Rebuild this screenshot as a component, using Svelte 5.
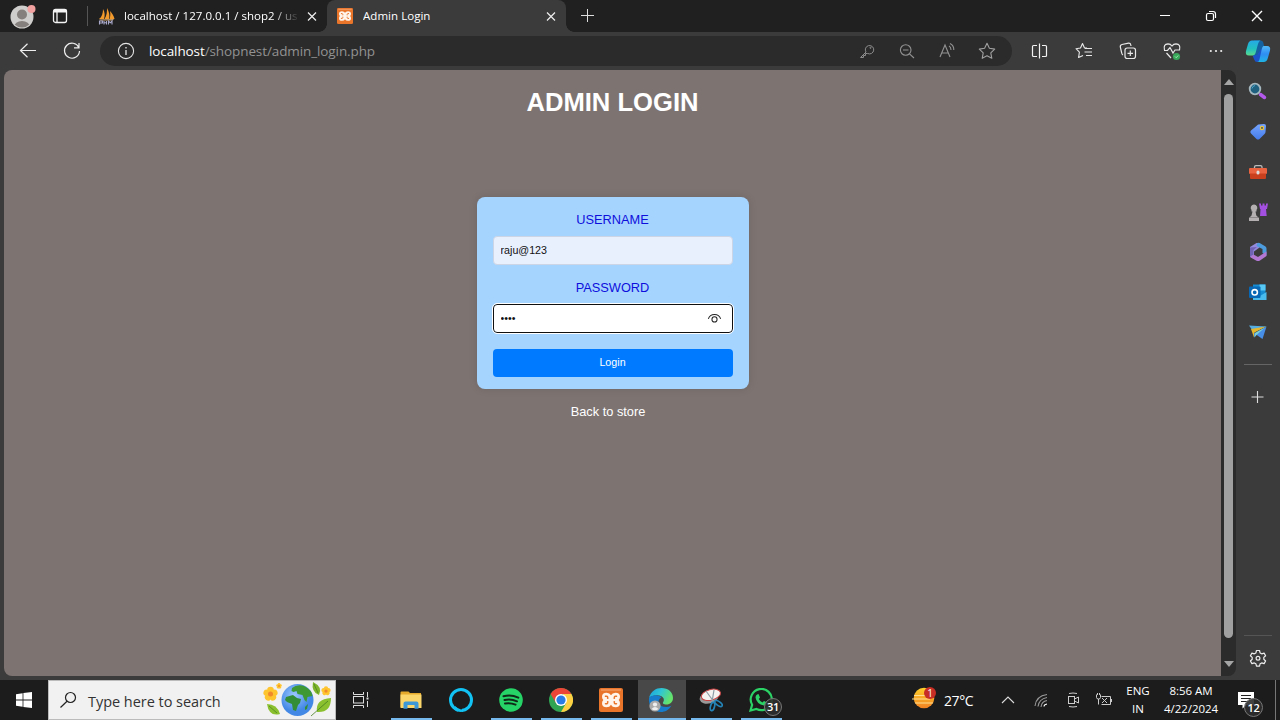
<script>
  let username = $state('raju@123');
  let password = $state('1234');
</script>

{#snippet xampp(size)}
  <svg width={size} height={size} viewBox="0 0 24 24">
    <rect width="24" height="24" rx="2" fill="#e9752b" />
    <path d="M2 2h20" stroke="#f6ab78" stroke-width="1" />
    <path d="M7.500 4.800Q10.800 4.800 12 7.300 13.200 4.800 16.500 4.800q4.500 0 4.500 4 0 2-1.300 3.200Q21 13.200 21 15.200q0 4-4.500 4-3.300 0-4.500-2.500-1.200 2.500-4.500 2.500-4.500 0-4.500-4 0-2 1.300-3.200Q3 10.800 3 8.800q0-4 4.500-4z" fill="#fff5ea" />
    <path d="M6.500 8.300q2.200-.500 2.200 1.400v4.600q0 1.900-2.200 1.400M17.500 8.300q-2.200-.500-2.200 1.400v4.600q0 1.900 2.200 1.400" fill="none" stroke="#e9752b" stroke-width="1.500" stroke-linecap="round" />
    <path d="M7 12h10" stroke="#fff5ea" stroke-width="2.200" />
  </svg>
{/snippet}

{#snippet close()}
  <svg width="12" height="12" viewBox="0 0 12 12"><path d="M2 2.500l8 8M10 2.500l-8 8" stroke="#eee" stroke-width="1.200" /></svg>
{/snippet}

{#snippet flower(x, y, s)}
  <g transform="translate({x} {y}) scale({s})">
    {#each [0, 72, 144, 216, 288] as a}
      <circle cx="0" cy="-4.000" r="3.300" fill="#ffc52e" transform="rotate({a})" />
    {/each}
    <circle r="2.500" fill="#f08a2c" />
  </g>
{/snippet}

<div class="screen">
  <div class="browser">
    <header class="tabs">
      <span class="avatar">
        <svg width="28" height="28" viewBox="0 0 28 28">
          <circle cx="14" cy="14" r="11.500" fill="#d0cecc" />
          <clipPath id="face"><circle cx="14" cy="14" r="10.500" /></clipPath>
          <g clip-path="url(#face)" fill="#85807d"><circle cx="14" cy="11.500" r="5" /><ellipse cx="14" cy="24" rx="8" ry="6" /></g>
          <circle cx="23.500" cy="6" r="4" fill="#f2a0a0" />
        </svg>
      </span>
      <span class="workspace">
        <svg width="16" height="16" viewBox="0 0 16 16"><rect x="1.500" y="1.500" width="13" height="13" rx="2" fill="none" stroke="#f4f4f4" stroke-width="1.300" /><path d="M1.500 3h13" stroke="#f4f4f4" stroke-width="3" /><path d="M5 4v10" stroke="#f4f4f4" stroke-width="1.300" /></svg>
      </span>
      <span class="tabline"></span>
      <div class="tab first">
        <svg width="17" height="17" viewBox="0 0 17 17">
          <path d="M1 11C4 9 5 5 5 1c2 3 2 7 1 10zM6.500 11C9 7 9 4 9 0c2 4 3 7 2 11zM11.500 11c1-3 1-5 .5-8 2 2 4 5 4.500 8z" fill="#f39a2d" />
          <path d="M1 11.500l15-.500-1.500 1.500h-12z" fill="#c9a06a" />
          <path d="M1.500 16.500v-3.500h3v2H2m4-2v3.500-1.800h2.500V13v3.500m2 0V13l1.800 1.800L14 13v3.500" stroke="#a9a9cc" stroke-width="1.100" fill="none" />
        </svg>
        <span class="tabname fade">localhost / 127.0.0.1 / shop2 / us</span>
        {@render close()}
      </div>
      <div class="tab active">
        {@render xampp(16)}
        <span class="tabname">Admin Login</span>
        {@render close()}
      </div>
      <span class="newtab"><svg width="16" height="16" viewBox="0 0 16 16"><path d="M7.500 1v13M1 7.500h13" stroke="#ddd" stroke-width="1" /></svg></span>
      <div class="windowbtns">
        <svg width="46" height="32" viewBox="0 0 46 32"><path d="M18 15.500h10" stroke="#fff" /></svg>
        <svg width="46" height="32" viewBox="0 0 46 32" fill="none" stroke="#fff" stroke-width="1.200"><rect x="18.500" y="13.500" width="7" height="7" rx="1.500" /><path d="M21 11.500h4q2.500 0 2.500 2.500v4" /></svg>
        <svg width="46" height="32" viewBox="0 0 46 32"><path d="M18 11l10 10M28 11L18 21" stroke="#fff" stroke-width="1.400" /></svg>
      </div>
    </header>

    <nav class="toolbar">
      <svg class="back" width="20" height="20" viewBox="0 0 20 20" fill="none" stroke="#eee" stroke-width="1.200"><path d="M18 9.500H2.500M9.500 2.800L2.500 9.500l7 6.700" /></svg>
      <svg class="reload" width="20" height="20" viewBox="0 0 20 20" fill="none" stroke="#eee" stroke-width="1.200"><path d="M16.800 6.500A7.500 7.500 0 1 0 17.500 10M17 2v4.800h-5" /></svg>
      <div class="address">
        <svg width="18" height="18" viewBox="0 0 18 18" fill="none" stroke="#e4e4e4"><circle cx="9" cy="9" r="7.600" stroke-width="1.100" /><path d="M9 8v5M9 5v1.400" stroke-width="1.300" /></svg>
        <span class="url"><b>localhost</b>/shopnest/admin_login.php</span>
        <div class="pageicons">
          <svg width="40" height="30" viewBox="0 0 40 30" fill="none" stroke="#8d8d8d"><path d="M19 16l-5.500 5.500h3v-2h2v-2h2.200a4.200 4.200 0 1 0-1.700-1.500z" stroke-linejoin="round" /><circle cx="23.500" cy="11.800" r=".6" /></svg>
          <svg width="40" height="30" viewBox="0 0 40 30" fill="none" stroke="#929292" stroke-width="1.100"><circle cx="18.700" cy="14" r="5.300" /><path d="M16 14h5.500M22.500 17.800l4.500 4.200" /></svg>
          <svg width="40" height="30" viewBox="0 0 40 30" fill="none" stroke="#929292" stroke-width="1.100"><path d="M13 21l5-12 5 12M15 17h6M22 10q2 1 2 4M23 7.500q4 2 3.800 6.500" /></svg>
          <svg width="40" height="30" viewBox="0 0 40 30" fill="none" stroke="#a0a0a0" stroke-width="1.100"><path d="M20 7.300l2.400 5 5.300.8-3.900 3.800 1 5.400-4.800-2.600-4.800 2.600 1-5.400-3.900-3.800 5.300-.8z" stroke-linejoin="round" /></svg>
        </div>
      </div>
      <div class="tools">
        <svg width="44" height="32" viewBox="0 0 44 32" fill="none" stroke="#f2f2f2" stroke-width="1.200"><path d="M19 10.500H15.500q-1 0-1 1v9q0 1 1 1H19M24 10.500H27.500q1 0 1 1v9q0 1-1 1H24M21.500 8.500v15" /></svg>
        <svg width="44" height="32" viewBox="0 0 44 32" fill="none" stroke="#e8e8e8" stroke-width="1.100"><path d="M25 13h-2.500L20.500 8.500l-2 4.500-4.500.7 3.400 3.500-.8 5.300 4.400-2M23 13.500h7M22.500 17h7.500M24 20.500h6" stroke-linejoin="round" /></svg>
        <svg width="44" height="32" viewBox="0 0 44 32" fill="none" stroke="#e8e8e8" stroke-width="1.200"><rect x="19" y="13" width="10.500" height="10.500" rx="2.200" /><path d="M24.300 15.500v5.500M21.500 18.300h5.500M17 20q-1-.5-1.300-2L14.300 12q-.3-2 1.700-2.500l6.500-1.300q2-.2 2.300 1.800l.2 1" /></svg>
        <svg width="44" height="32" viewBox="0 0 44 32" fill="none" stroke="#e8e8e8" stroke-width="1.200"><path d="M14.500 15Q13 9 18 8.800q2.500 0 4 2.200 1.500-2.200 4-2.200 5 .2 3.500 6.200M14 15.500h3.500l2.500-3 3 5.500 2-3h5M16.500 18l4.500 5" /><circle cx="26.500" cy="21.500" r="3.600" fill="#39a85a" stroke="none" /><path d="M25 21.500l1.200 1.200 2-2.200" stroke="#b8ffc6" stroke-width=".8" /></svg>
        <svg width="44" height="32" viewBox="0 0 44 32" fill="#eee"><circle cx="16.800" cy="16" r="1.100" /><circle cx="22" cy="16" r="1.100" /><circle cx="27.200" cy="16" r="1.100" /></svg>
      </div>
      <svg class="copilot" width="26" height="26" viewBox="0 0 26 26">
        <defs>
          <linearGradient id="cpA" x2="0" y2="1"><stop stop-color="#25a9e8" /><stop offset=".55" stop-color="#22c0c0" /><stop offset="1" stop-color="#5bdc8c" /></linearGradient>
          <linearGradient id="cpB" x2="0" y2="1"><stop stop-color="#52b9f8" /><stop offset=".5" stop-color="#2f8df2" /><stop offset="1" stop-color="#1fb4e4" /></linearGradient>
        </defs>
        <path d="M9 2.500h6.500q2.500 0 3 3l.8 3-5 9.500H9z" fill="#14629f" />
        <path d="M7.500 17.500l4.500-.500 5.500-8-2 12.500q-.6 2.500-3.300 2.500-2.300 0-3-2.500z" fill="#1c53c9" />
        <path d="M7 2.500h8.500q-1.800.8-2.500 3.500l-2.300 8.500Q10 17.500 7.500 17.500H4q-4 0-3-4.500L3 6q1-3.500 4-3.500z" fill="url(#cpA)" />
        <path d="M18.500 8H22q4 0 3 4.500l-2 7q-1 4.500-4.500 4.500H12q2 0 2.700-3.500L16.800 11q.5-2.500 1.700-3z" fill="url(#cpB)" />
      </svg>
    </nav>

    <div class="content">
      <main class="page">
        <h1>ADMIN LOGIN</h1>
        <form onsubmit={(e) => e.preventDefault()}>
          <label for="username">USERNAME</label>
          <input id="username" type="text" bind:value={username} />
          <label for="password">PASSWORD</label>
          <div class="password">
            <input id="password" type="password" bind:value={password} />
            <svg width="15" height="11" viewBox="0 0 16 12" fill="none" stroke="#222" stroke-width="1.100"><path d="M1.300 6.500Q2.800 1.700 8 1.700t6.700 4.800" /><circle cx="8" cy="7" r="2.800" /></svg>
          </div>
          <button>Login</button>
        </form>
        <a href="#store">Back to store</a>
      </main>
      <div class="scrollbar">
        <svg width="10" height="6" viewBox="0 0 10 6"><path d="M5 0l5 6H0z" fill="#a5a5a5" /></svg>
        <span class="thumb"></span>
        <svg width="10" height="6" viewBox="0 0 10 6"><path d="M0 0h10L5 6z" fill="#a5a5a5" /></svg>
      </div>
      <aside class="sidebar">
        <svg viewBox="0 0 40 40"><path d="M22.500 22.500l4 3" stroke="#b359ec" stroke-width="3.500" stroke-linecap="round" /><circle cx="17" cy="17" r="5.300" fill="#1f607f" stroke="#a5b7be" stroke-width="1.800" /><path d="M14 16.500q.5-2.500 3-3" stroke="#4ea5c5" fill="none" /></svg>
        <svg viewBox="0 0 40 40"><defs><linearGradient id="tagG" x2="0" y2="1"><stop stop-color="#75a4ff" /><stop offset="1" stop-color="#457ce9" /></linearGradient></defs><path d="M20.500 12.500L26 12q2 0 2 2l-.5 6q0 1-1 2l-5 5q-1.500 1-3 0l-5.500-5.500q-1.500-1.500 0-3l6-5q.8-.8 1.500-1z" fill="url(#tagG)" /><circle cx="24" cy="15.900" r="1.600" fill="#334b68" stroke="#edc63c" stroke-width="1.300" /></svg>
        <svg viewBox="0 0 40 40"><path d="M16.500 17v-2q0-1.300 1.500-1.300h4.500q1.500 0 1.500 1.300v2" fill="none" stroke="#bbb" stroke-width="1.300" /><rect x="11" y="16" width="18" height="6" rx="1" fill="#e96340" /><path d="M12 21.500h16V26q0 1-1 1H13q-1 0-1-1z" fill="#c9401f" /><rect x="18.500" y="18.500" width="3" height="4" rx="1.500" fill="#ddd" /></svg>
        <svg viewBox="0 0 40 40"><path d="M21 11.500h2v2h1.500v-2h2v2H28v-2h2l-1 5.500h-1l.7 7H22l.5-7H22z" fill="#a34fe0" /><path d="M16 12.500a3.300 3.300 0 0 1 2.500 5.500v1.500h-1l.8 4 2.700 2.500v3H11v-3l2.500-2.500 1-4h-1v-1.500A3.300 3.300 0 0 1 16 12.500z" fill="#b4b0b1" /><path d="M12 25.500h8" stroke="#8c888a" /></svg>
        <svg viewBox="0 0 40 40"><path d="M18.500 11L12 15v9.500l4 2.500v-7.500l5.500-4V12q-1.500-1.500-3-1z" fill="#9389dd" /><path d="M19.500 11q1.500-.5 3 .5l5 3q1 1 1 2v7l-4-2.500V17l-6-3z" fill="#4c9cdd" /><path d="M28.500 19.500V24l-6.500 4.500q-2 1-4 0L12 25l3.500-2.500L20 25z" fill="#b177d3" /><path d="M12 15.500v9l3.500-2V18l3.500-3z" fill="#6f62b4" /></svg>
        <svg viewBox="0 0 40 40"><path d="M15 12.500h12.500V27H15z" fill="#168cd2" /><path d="M21.500 12.500h6v6h-6z" fill="#58c8f4" /><path d="M15 20l7 4 6.500-4v8H15z" fill="#49bced" /><rect x="11" y="14.500" width="11.500" height="11.500" rx="1" fill="#0968b5" /><circle cx="16.700" cy="20.300" r="2.700" fill="none" stroke="#fff" stroke-width="1.600" /></svg>
        <svg viewBox="0 0 40 40"><path d="M11 13.500l17.500 1L15.500 20z" fill="#54aee2" /><path d="M13 17l15-2.500-11.500 6-.5 5z" fill="#e3b62e" /><path d="M28.500 14.500L24.500 27 18 22.500l-2 3v-4z" fill="#478ee7" /><path d="M17 21l10-5.500-8 7-2.500 3z" fill="#7cd1d4" /></svg>
        <span class="rule"></span>
        <svg viewBox="0 0 40 40"><path d="M19.500 14v12M13.500 20h12" stroke="#ddd" stroke-width="1.100" /></svg>
        <span class="rule low"></span>
        <svg viewBox="0 0 40 40" fill="none" stroke="#eee" stroke-width="1.200"><path d="M18.500 12.500h3l.6 2.400 1.600.9 2.400-.7 1.500 2.600-1.800 1.700v1.900l1.800 1.700-1.500 2.600-2.400-.7-1.600.9-.6 2.400h-3l-.6-2.400-1.600-.9-2.400.7-1.500-2.600 1.800-1.700v-1.900l-1.800-1.700 1.500-2.600 2.400.7 1.600-.9z" stroke-linejoin="round" /><circle cx="20" cy="20.300" r="1.900" /></svg>
      </aside>
    </div>
  </div>

  <footer class="taskbar">
    <span class="start"><svg width="16" height="16" viewBox="0 0 16 16" fill="#fff"><path d="M0 2.200L6.600 1.200V7.600H0zM7.400 1.100L16 0v7.600H7.400zM0 8.400h6.600v6.400L0 13.800zM7.400 8.400H16V16l-8.600-1.100z" /></svg></span>
    <div class="search">
      <svg width="18" height="18" viewBox="0 0 18 18" fill="none" stroke="#222" stroke-width="1.200"><circle cx="11.500" cy="6.500" r="5" /><path d="M8 10.200L1.500 16.500" /></svg>
      <span>Type here to search</span>
      <svg class="doodle" width="72" height="36" viewBox="0 0 72 36">
        <defs><radialGradient id="sea" cx=".4" cy=".35"><stop stop-color="#9cc7ff" /><stop offset="1" stop-color="#4388e5" /></radialGradient></defs>
        {@render flower(8.5, 12, 1)}
        {@render flower(17, 4, 0.4)}
        {@render flower(64, 9, 0.65)}
        <path d="M5 22q10 0 13 10Q7 35 5 22z" fill="#8abf2d" /><path d="M7 24l8 7" stroke="#467f20" stroke-width=".7" />
        <path d="M51 0q10 5 6 13-8-3-6-13z" fill="#7eb52b" /><path d="M52 2l4 9" stroke="#467f20" stroke-width=".7" />
        <path d="M69 16Q53 17 55 30q14 1 14-14z" fill="#8abf2d" /><path d="M66 19L49 34" stroke="#467f20" stroke-width=".8" />
        <circle cx="35.500" cy="18" r="16" fill="url(#sea)" />
        <path d="M30 6q5-4 12-2 8 4 8.500 10l-5 1-1 5-2-2-2-5-5-1-1-3-3 1-2-1z" fill="#3e9935" />
        <path d="M24 15l7-2 4 3 4 1-1 4-2 2-2 6-3-1-1-6-5-2-2-2z" fill="#338d36" />
        <path d="M43 25l3-3-1 5-2 1z" fill="#338d36" />
      </svg>
    </div>
    <span class="taskview"><svg width="18" height="18" viewBox="0 0 18 18" fill="none" stroke="#ddd"><path d="M1.500 1v2.500h10V1M1.500 17v-2.500h10V17M15.500 1v5M15.500 10v6" /><rect x="1.500" y="5.500" width="10" height="6.500" /><path d="M14.500 7.500h2" stroke-width="2" /></svg></span>
    <div class="apps">
      <span class="app open"><svg viewBox="0 0 24 24"><path d="M1.500 4.500q0-1 1-1h7l1.500 1.500h11V19h-20.500z" fill="#e5aa2c" /><path d="M1.500 6.500h21v13.500h-21z" fill="#fbd66b" /><path d="M4.500 20.800v-5.300q0-2 2-2h11q2 0 2 2v5.300h-4v-3.800h-7v3.800z" fill="#3d98d8" /></svg></span>
      <span class="app"><svg viewBox="0 0 24 24"><circle cx="12" cy="12" r="10.500" fill="none" stroke="#11c2f2" stroke-width="3" /><path d="M9 19.500h4v4.500h-4z" fill="#1c1c1c" /><path d="M6 18q2.500 2.500 6 3.500l2-.500v2.800q-6 .8-9-2.800z" fill="#11c2f2" /></svg></span>
      <span class="app open"><svg viewBox="0 0 24 24"><circle cx="12" cy="12" r="11.800" fill="#25d366" /><path d="M4.500 8.300q7.500-2 14.800 1.300M5.500 12q6.500-1.500 12.500 1.300M6 15.500q5.500-1 10.500 1.200" stroke="#102818" stroke-width="2" fill="none" stroke-linecap="round" /></svg></span>
      <span class="app open"><svg viewBox="0 0 24 24"><circle cx="12" cy="12" r="12" fill="#31a454" /><path d="M1.600 6A12 12 0 0 1 22.400 6H12L7 15z" fill="#ea4537" /><path d="M22.400 6A12 12 0 0 1 12 24l5.200-9L14 6z" fill="#fdd043" /><circle cx="12" cy="12" r="6" fill="#fff" /><circle cx="12" cy="12" r="4.600" fill="#297be6" /></svg></span>
      <span class="app open">{@render xampp(24)}</span>
      <span class="app open current"><svg viewBox="0 0 26 24"><defs><linearGradient id="eg" x2="1" y2=".4"><stop stop-color="#199edb" /><stop offset=".5" stop-color="#2fc5d5" /><stop offset="1" stop-color="#65e36b" /></linearGradient></defs><path d="M1 10C3 3 8 0 13.500 0 20 0 25 4 25 10c0 4-3 6.500-6.500 6.500-3 0-4.500-1-3-3 .8-1.500.5-4-2-5.300C10 6.500 4 7 1 10z" fill="url(#eg)" /><path d="M1 10c2-2 5-3 8-2.500 3 .3 4.500 1.700 4.500 1.700-5 2.800-4 9.800 5 9.800 3 0 5-1.500 5-1.500C21 22 17 24 13 24 6 24 0 18 1 10z" fill="#167ccb" /><circle cx="7" cy="18" r="5.600" fill="#aaa" /><circle cx="7" cy="16.500" r="2.100" fill="#eee" /><path d="M3.500 21q3.500-4 7 0-3.500 2.500-7 0z" fill="#eee" /></svg></span>
      <span class="app open"><svg viewBox="0 0 24 24"><ellipse cx="10" cy="9.500" rx="9.500" ry="6" fill="#999" transform="rotate(-14 10 9.500)" /><ellipse cx="12" cy="6.800" rx="9.800" ry="5.300" fill="#f5f2f2" stroke="#c94444" transform="rotate(-15 12 7)" /><path d="M7 3l8 11M15 2l-2 12" stroke="#8c9ca5" stroke-width="1.200" /><g fill="none" stroke="#2483b7" stroke-width="1.700"><ellipse cx="13.500" cy="18.500" rx="2" ry="4.300" transform="rotate(15 13.500 18.500)" /><ellipse cx="19.500" cy="15.500" rx="2" ry="4.300" transform="rotate(-55 19.500 15.500)" /></g></svg></span>
      <span class="app open"><svg viewBox="0 0 24 24"><path d="M1.500 22.500l1.600-5.700A10.600 10.600 0 1 1 7.500 21z" fill="none" stroke="#2bd366" stroke-width="2.200" /><path d="M8 6.500l1.500-.5 1.500 3.500-1.200 1.500q1.200 2.300 3.600 3.400l1.600-1.400 3.200 1.500q0 3-3.200 3Q7.500 16 6.500 9.500 6.500 7.500 8 6.500z" fill="#2bd366" /></svg><b class="badge">31</b></span>
    </div>
    <div class="tray">
      <span class="weather"><svg width="26" height="24" viewBox="0 0 26 24"><defs><linearGradient id="sun" x2="0" y2="1"><stop stop-color="#ffd02b" /><stop offset="1" stop-color="#f28222" /></linearGradient></defs><circle cx="12" cy="12" r="10.300" fill="url(#sun)" /><path d="M2 9.500h17M0 13h18M3 17h18" stroke="#ffdf91" stroke-width="1.200" /><circle cx="18" cy="7" r="6" fill="#c72e25" /><text x="18" y="10.500" font-size="10" text-anchor="middle" fill="#fff">1</text></svg>27°C</span>
      <svg class="chev" width="16" height="16" viewBox="0 0 16 16" fill="none" stroke="#ddd" stroke-width="1.100"><path d="M2 11l6-6 6 6" /></svg>
      <svg class="stat" width="16" height="16" viewBox="0 0 16 16" fill="none" stroke="#999" stroke-width="1.100"><path d="M2 14Q3 4 14 2.500M5 14.500Q6 7 14 5.500M8 15q.5-5.500 6-6.500" /><path d="M11 14.500q0-2 3-2.500" stroke="#fff" /></svg>
      <svg class="stat" width="16" height="18" viewBox="0 0 16 18" fill="none" stroke="#ccc"><rect x="3.500" y="5.500" width="6" height="7" /><path d="M9.500 8l4-2v6l-4-2M4 2.500q4-1 8 0M4 15.500q4 1 8 0" /></svg>
      <svg class="stat batt" width="18" height="16" viewBox="0 0 18 16" fill="none" stroke="#ccc"><path d="M1.500 2.500v3q0 1.500 2 1.500t2-1.500v-3M2.500 1v2M4.500 1v2M3.500 7v5.500M6.500 4.500h9v8h-9M16.500 7v3M7 6l5 5M12 6l-5 5" /></svg>
      <span class="lang">ENG<br />IN</span>
      <span class="clock">8:56 AM<br />4/22/2024</span>
      <span class="notes"><svg width="17" height="17" viewBox="0 0 17 17"><path d="M0 0h16v13H8.500l-4 3.500V13H0z" fill="#fff" /><path d="M3 3.500h10M3 6.500h10M3 9.500h7" stroke="#222" /></svg><b class="badge">12</b></span>
      <span class="desktop"></span>
    </div>
  </footer>
</div>

<style>
  :global(body) { margin: 0; overflow: hidden; }
  .screen { width: 1280px; height: 720px; display: flex; flex-direction: column; background: #3b3b3b; color: #fff; font-family: 'Open Sans', 'Noto Sans', sans-serif; overflow: hidden; }
  svg { display: block; flex: none; }
  .browser { height: 680px; display: flex; flex-direction: column; }
  .tabs { height: 32px; background: #202020; display: flex; align-items: center; }
  .avatar { margin-left: 8px; margin-top: 1px; }
  .workspace { margin-left: 16px; }
  .tabline { width: 1px; height: 20px; background: #555; margin-left: 19px; }
  .tab { display: flex; align-items: center; height: 32px; box-sizing: border-box; font-size: 11.500px; }
  .first { width: 239px; padding: 0 8px 0 10px; background: #202020; }
  .first .tabname { margin-left: 9px; width: 176px; margin-right: 6px; letter-spacing: .02px; }
  .tabname { white-space: nowrap; overflow: hidden; padding-bottom: 2px; }
  .fade { mask-image: linear-gradient(90deg, #000 84%, transparent 100%); }
  .active { width: 239px; background: #3b3b3b; border-radius: 8px 8px 0 0; padding: 0 9px 0 10px; position: relative; }
  .active::before, .active::after { content: ''; position: absolute; bottom: 0; width: 8px; height: 8px; }
  .active::before { left: -8px; background: radial-gradient(circle at 0 0, #202020 7.500px, #3b3b3b 8px); }
  .active::after { right: -8px; background: radial-gradient(circle at 100% 0, #202020 7.500px, #3b3b3b 8px); }
  .active .tabname { margin-left: 10px; flex: 1; letter-spacing: .04px; }
  .newtab { margin-left: 14px; }
  .windowbtns { margin-left: auto; display: flex; }
  .toolbar { height: 38px; display: flex; align-items: center; }
  .back { margin-left: 18px; }
  .reload { margin-left: 24px; }
  .address { margin-left: 18px; width: 912px; height: 30px; border-radius: 15px; background: #2b2b2b; display: flex; align-items: center; padding-left: 17px; box-sizing: border-box; }
  .url { font-size: 13.500px; letter-spacing: -.1px; color: #929292; margin-left: 14px; }
  .url b { font-weight: 400; color: #fff; }
  .pageicons { display: flex; margin-left: auto; margin-right: 5px; }
  .tools { display: flex; margin-left: 6px; }
  .copilot { margin-left: auto; margin-right: 9px; }
  .content { height: 610px; display: flex; padding-left: 4px; }
  .page { width: 1217px; height: 606px; background: #7d7472; border-radius: 8px 0 0 8px; display: flex; flex-direction: column; align-items: center; font-family: 'Liberation Sans', Arial, sans-serif; }
  h1 { margin: 17px 0 0; font-size: 25.600px; line-height: 30px; font-weight: 700; }
  form { width: 272px; height: 192px; margin-top: 80px; padding: 16px 16px 12px; background: #a5d4ff; border-radius: 8px; box-sizing: border-box; display: flex; flex-direction: column; box-shadow: 0 0 8px rgba(0, 0, 0, .12); }
  form > * { flex: none; }
  label { font-size: 12.800px; line-height: 14px; color: #0f0fdc; text-align: center; margin-bottom: 9px; }
  input { width: 240px; height: 29px; box-sizing: border-box; border: 1px solid #ccd5e5; border-radius: 4px; background: #e8f0fe; padding: 0 7px 2px; font: 10.700px 'Liberation Sans', Arial, sans-serif; color: #111; outline: none; }
  #username { margin-bottom: 16px; }
  .password { display: flex; align-items: center; height: 29px; box-sizing: border-box; background: #fff; border: 1.500px solid #101010; outline: 1px solid #fff; border-radius: 4px; padding-right: 10px; }
  .password input { border: 0; background: transparent; height: 26px; width: auto; flex: 1; min-width: 0; }
  button { margin-top: 16px; height: 28px; padding: 0 6px 2px; border: 0; border-radius: 4px; background: #007bff; color: #fff; font: 10.700px 'Liberation Sans', Arial, sans-serif; }
  .page a { color: #fff; text-decoration: none; font-size: 12.800px; line-height: 15px; margin: 15px 9px 0 0; }
  .scrollbar { width: 15px; height: 606px; background: #2b2b2b; border-radius: 0 8px 8px 0; display: flex; flex-direction: column; align-items: center; padding: 9px 0; box-sizing: border-box; }
  .thumb { width: 9px; height: 544px; border-radius: 5px; background: #a0a0a0; margin: 9px 0 auto; }
  .sidebar { width: 44px; display: flex; flex-direction: column; align-items: center; padding-top: 2px; box-sizing: border-box; height: 608px; }
  .sidebar svg { width: 40px; height: 40px; }
  .rule { width: 28px; height: 1px; background: #656565; margin: 12px 0 12px; flex: none; }
  .rule.low { margin: auto 0 2px; background: #555; }
  .taskbar { height: 40px; background: #1c1c1c; display: flex; align-items: center; }
  .start { width: 48px; display: flex; justify-content: center; }
  .search { width: 288px; height: 40px; box-sizing: border-box; background: #f1f1f1; border: 1px solid #bbb; display: flex; align-items: center; padding-left: 10px; color: #333; font-size: 14.500px; letter-spacing: -.04px; }
  .search span { margin-left: 11px; margin-top: 3px; white-space: nowrap; }
  .doodle { margin-left: auto; margin-right: 1px; }
  .taskview { width: 50px; display: flex; justify-content: center; }
  .apps { display: flex; }
  .app { width: 50px; height: 40px; display: flex; align-items: center; justify-content: center; position: relative; }
  .app svg { width: 24px; height: 24px; }
  .open::after { content: ''; position: absolute; bottom: 0; left: 5px; width: 41px; height: 2px; background: #76b9ed; }
  .current { background: linear-gradient(90deg, transparent 2px, #484848 2px, #484848 50px); }
  .current svg { width: 26px; }
  .current::after { left: 2px; width: 48px; }
  .badge { position: absolute; width: 18px; height: 18px; border: 1px solid #777; border-radius: 50%; background: rgba(45, 45, 45, .9); font-size: 11px; line-height: 16px; font-weight: 600; text-align: center; box-sizing: border-box; letter-spacing: -.3px; }
  .app .badge { left: 28px; top: 18px; }
  .tray { margin-left: auto; display: flex; align-items: center; height: 40px; }
  .weather { display: flex; align-items: center; gap: 6px; font-size: 14px; letter-spacing: -.4px; width: 69px; white-space: nowrap; }
  .weather svg { margin-top: -5px; }
  .chev { margin-left: 19px; margin-right: 17px; }
  .stat { margin-right: 16px; }
  .batt { margin-left: -2px; margin-right: 5px; }
  .lang, .clock { text-align: center; font-size: 11.500px; line-height: 18px; letter-spacing: -.05px; }
  .lang { width: 40px; }
  .clock { width: 66px; white-space: nowrap; }
  .notes { position: relative; margin-left: 14px; }
  .notes .badge { left: 6px; top: 6px; width: 19px; height: 19px; line-height: 17px; }
  .desktop { width: 1px; height: 40px; background: #777; margin-left: 20px; margin-right: 4px; }
</style>
